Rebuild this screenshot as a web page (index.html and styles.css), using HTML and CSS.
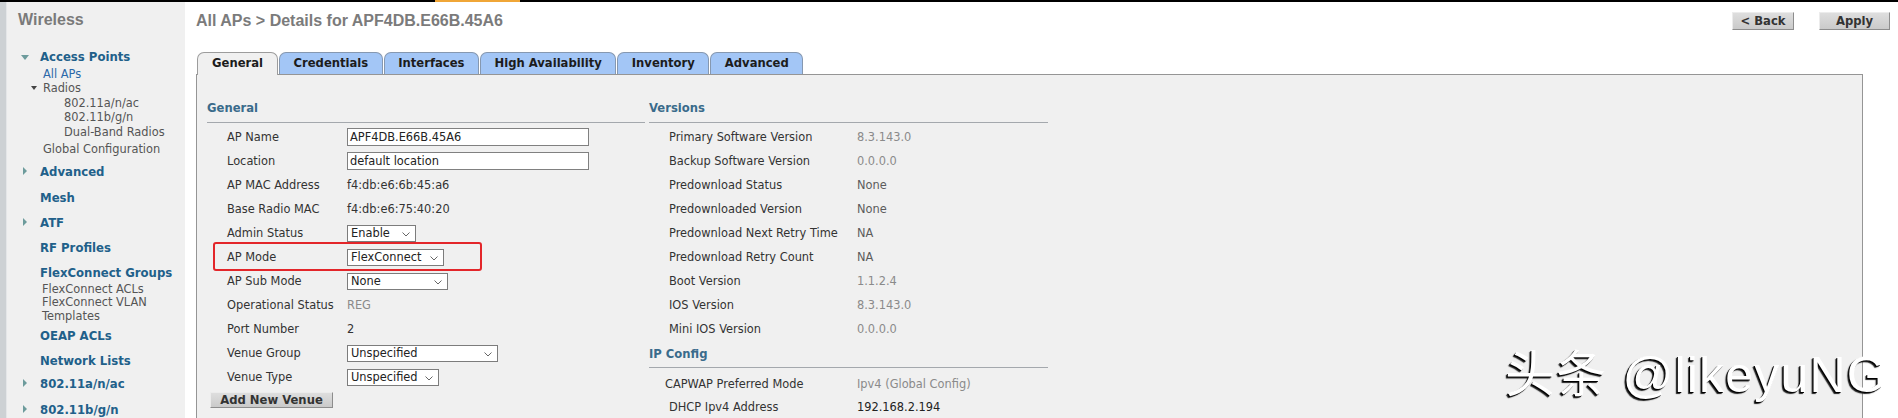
FILE: index.html
```html
<!DOCTYPE html>
<html lang="en">
<head>
  <meta charset="UTF-8">
  <title>All APs &gt; Details</title>
  <link rel="stylesheet" href="styles.css">
</head>
<body>
  <div class="topline"></div>
  <div class="page">
    <div class="strip"></div>

    <div class="sidebar">
      <div class="side-title">Wireless</div>
      <ul class="menu">
        <li class="item"><span class="arrow down"></span>Access Points</li>
        <li class="sub">
          <div class="link current">All APs</div>
          <div class="link"><span class="mini-arrow"></span>Radios</div>
          <div class="link deep">802.11a/n/ac</div>
          <div class="link deep">802.11b/g/n</div>
          <div class="link deep">Dual-Band Radios</div>
          <div class="link global">Global Configuration</div>
        </li>
        <li class="item gap6"><span class="arrow right"></span>Advanced</li>
        <li class="item gap6">Mesh</li>
        <li class="item"><span class="arrow right"></span>ATF</li>
        <li class="item">RF Profiles</li>
        <li class="item">FlexConnect Groups</li>
        <li class="sub flex">
          <div class="link">FlexConnect ACLs</div>
          <div class="link">FlexConnect VLAN Templates</div>
        </li>
        <li class="item gap3">OEAP ACLs</li>
        <li class="item">Network Lists</li>
        <li class="item gap3"><span class="arrow right"></span>802.11a/n/ac</li>
        <li class="item gap6"><span class="arrow right"></span>802.11b/g/n</li>
      </ul>
    </div>

    <div class="main">
      <div class="header">
        <h1>All APs &gt; Details for APF4DB.E66B.45A6</h1>
        <div class="actions">
          <button class="btn back">&lt; Back</button>
          <button class="btn apply">Apply</button>
        </div>
      </div>

      <ul class="tabs">
        <li class="tab selected">General</li>
        <li class="tab">Credentials</li>
        <li class="tab">Interfaces</li>
        <li class="tab">High Availability</li>
        <li class="tab">Inventory</li>
        <li class="tab">Advanced</li>
      </ul>

      <div class="panel">
        <div class="col col-left">
          <div class="section-title">General</div>
          <div class="row"><span class="label">AP Name</span><span class="textbox">APF4DB.E66B.45A6</span></div>
          <div class="row"><span class="label">Location</span><span class="textbox">default location</span></div>
          <div class="row"><span class="label">AP MAC Address</span><span class="value">f4:db:e6:6b:45:a6</span></div>
          <div class="row"><span class="label">Base Radio MAC</span><span class="value">f4:db:e6:75:40:20</span></div>
          <div class="row"><span class="label">Admin Status</span><span class="select w-admin">Enable<svg width="8" height="5" viewBox="0 0 8 5"><path d="M0.5 0.5 L4 4 L7.5 0.5" fill="none" stroke="#666"/></svg></span></div>
          <div class="row marked"><span class="label">AP Mode</span><span class="select w-mode">FlexConnect<svg width="8" height="5" viewBox="0 0 8 5"><path d="M0.5 0.5 L4 4 L7.5 0.5" fill="none" stroke="#666"/></svg></span></div>
          <div class="row"><span class="label">AP Sub Mode</span><span class="select w-sub">None<svg width="8" height="5" viewBox="0 0 8 5"><path d="M0.5 0.5 L4 4 L7.5 0.5" fill="none" stroke="#666"/></svg></span></div>
          <div class="row"><span class="label">Operational Status</span><span class="value light">REG</span></div>
          <div class="row"><span class="label">Port Number</span><span class="value">2</span></div>
          <div class="row"><span class="label">Venue Group</span><span class="select w-group">Unspecified<svg width="8" height="5" viewBox="0 0 8 5"><path d="M0.5 0.5 L4 4 L7.5 0.5" fill="none" stroke="#666"/></svg></span></div>
          <div class="row"><span class="label">Venue Type</span><span class="select w-type">Unspecified<svg width="8" height="5" viewBox="0 0 8 5"><path d="M0.5 0.5 L4 4 L7.5 0.5" fill="none" stroke="#666"/></svg></span></div>
          <button class="btn venue">Add New Venue</button>
        </div>

        <div class="col col-right">
          <div class="section-title">Versions</div>
          <div class="row"><span class="label">Primary Software Version</span><span class="value light">8.3.143.0</span></div>
          <div class="row"><span class="label">Backup Software Version</span><span class="value light">0.0.0.0</span></div>
          <div class="row"><span class="label">Predownload Status</span><span class="value mid">None</span></div>
          <div class="row"><span class="label">Predownloaded Version</span><span class="value mid">None</span></div>
          <div class="row"><span class="label">Predownload Next Retry Time</span><span class="value mid">NA</span></div>
          <div class="row"><span class="label">Predownload Retry Count</span><span class="value mid">NA</span></div>
          <div class="row"><span class="label">Boot Version</span><span class="value light">1.1.2.4</span></div>
          <div class="row"><span class="label">IOS Version</span><span class="value light">8.3.143.0</span></div>
          <div class="row"><span class="label">Mini IOS Version</span><span class="value light">0.0.0.0</span></div>
          <div class="section-title second">IP Config</div>
          <div class="row tight"><span class="label nudge">CAPWAP Preferred Mode</span><span class="value light">Ipv4 (Global Config)</span></div>
          <div class="row tight"><span class="label">DHCP Ipv4 Address</span><span class="value dark">192.168.2.194</span></div>
        </div>
      </div>
    </div>
  </div>

  <div class="watermark">头条 @likeyuNG</div>
</body>
</html>
```

FILE: styles.css
```css
html, body {
  margin: 0;
  height: 418px;
  overflow: hidden;
  background: #fff;
}
body {
  position: relative;
  font-family: "DejaVu Sans", Verdana, sans-serif;
  font-size: 11.4px;
  color: #333;
}

/* --------------- top line ----------------- */
.topline {
  height: 2px;
  background: linear-gradient(to right, #000 435px, #f0a637 435px, #f0a637 520px, #000 520px);
}

.page {
  display: flex;
  height: 416px;
}

.strip {
  width: 6px;
  background: #cdd1d4;
  border-right: 1px solid #e4e6e8;
}

/* --------------- sidebar ----------------- */
.sidebar {
  width: 167px;
  padding: 8px 0 0 11px;
  background: #f0f0f0;
  flex-shrink: 0;
}
.side-title {
  font-family: "Liberation Sans", Arial, sans-serif;
  font-weight: bold;
  font-size: 16px;
  line-height: 20px;
  color: #7a7a7a;
}
.menu {
  list-style: none;
  margin: 0;
  padding: 0;
  padding-top: 17px;
}
.item {
  position: relative;
  margin-top: 5px;
  padding-left: 22px;
  line-height: 20px;
  font-weight: bold;
  font-size: 11.7px;
  color: #21608a;
  white-space: nowrap;
}
.menu > .item:first-child { margin-top: 0; }
.item.gap6 { margin-top: 6px; }
.item.gap3 { margin-top: 3px; }

.arrow {
  position: absolute;
  width: 0;
  height: 0;
}
.arrow.down {
  left: 3px;
  top: 8px;
  border-left: 4px solid transparent;
  border-right: 4px solid transparent;
  border-top: 5px solid #6d9b9c;
}
.arrow.right {
  left: 5px;
  top: 5px;
  border-top: 4.5px solid transparent;
  border-bottom: 4.5px solid transparent;
  border-left: 4px solid #6d9b9c;
}

.sub {
  padding-left: 25px;
  width: 128px;
  font-size: 11.4px;
  color: #555;
}
.sub .link { line-height: 14.4px; position: relative; }
.sub .current { color: #2b68a8; }
.sub .deep { padding-left: 21px; }
.sub .global { margin-top: 2.5px; }
.sub.flex { padding-left: 24px; width: 126px; }
.sub.flex .link { line-height: 13.5px; }
.mini-arrow {
  position: absolute;
  left: -12px;
  top: 5px;
  border-left: 3px solid transparent;
  border-right: 3px solid transparent;
  border-top: 4px solid #444;
}

/* --------------- main ----------------- */
.main {
  flex: 1;
  margin-left: 11px;
  padding-right: 8px;
  display: flex;
  flex-direction: column;
}
.header {
  display: flex;
  justify-content: space-between;
  align-items: flex-start;
  height: 50px;
}
h1 {
  margin: 9px 0 0 0;
  font-family: "Liberation Sans", Arial, sans-serif;
  font-size: 16px;
  line-height: 20px;
  color: #7b7b7b;
}
.actions {
  display: flex;
  gap: 25px;
  margin-top: 10px;
}
.btn {
  font-family: "DejaVu Sans", Verdana, sans-serif;
  font-weight: bold;
  font-size: 11.6px;
  color: #333;
  height: 18px;
  padding: 0;
  background: linear-gradient(#dedede, #cacaca);
  border: 1px solid #ececec;
  border-right-color: #8d8d8d;
  border-bottom-color: #8d8d8d;
  border-radius: 0;
}
.back { width: 62px; }
.apply { width: 71px; }

/* --------------- tabs ----------------- */
.tabs {
  display: flex;
  align-items: flex-end;
  gap: 1px;
  list-style: none;
  margin: 0 0 -1px 1px;
  padding: 0;
  position: relative;
  z-index: 2;
}
.tab {
  height: 21px;
  line-height: 21px;
  padding: 0 13.5px;
  margin-bottom: 1px;
  font-weight: bold;
  font-size: 11.6px;
  color: #1c1c1c;
  background: #a3c6f6;
  border: 1px solid #8698b0;
  border-bottom: none;
  border-radius: 7px 7px 0 0;
}
.tab.selected {
  height: 22px;
  margin-bottom: 0;
  padding: 0 14px;
  background: #f0f0f0;
  border-color: #9c9c9c;
}

/* --------------- panel ----------------- */
.panel {
  flex: 1;
  display: flex;
  gap: 4px;
  margin-right: 27px;
  padding: 23px 10px 0;
  background: #f0f0f0;
  border: 1px solid #959595;
  border-bottom: none;
}
.col-left { width: 438px; }
.col-right { width: 399px; }

.section-title {
  font-weight: bold;
  font-size: 11.6px;
  line-height: 20px;
  padding-bottom: 4px;
  margin-bottom: 2px;
  color: #3a6b8b;
  border-bottom: 1px solid #a4a8ad;
}
.section-title.second {
  margin-top: 3px;
  padding-bottom: 3px;
  margin-bottom: 4px;
}

.row {
  display: flex;
  align-items: center;
  height: 24px;
  padding-left: 20px;
  position: relative;
}
.row.tight { height: 23px; }
.col-left .label { width: 120px; }
.col-right .label { width: 188px; }
.label.nudge { margin-left: -4px; width: 192px; }

.value { color: #333; }
.value.light { color: #8a8a8a; }
.value.mid { color: #5c5c5c; }
.value.dark { color: #222; }

.textbox {
  width: 238px;
  height: 16px;
  line-height: 16px;
  padding-left: 2px;
  background: #fff;
  border: 1px solid #808080;
  color: #222;
}
.select {
  display: flex;
  justify-content: space-between;
  align-items: center;
  height: 15px;
  line-height: 15px;
  padding: 0 5px 0 3px;
  background: #fff;
  border: 1px solid #7c7c7c;
  color: #222;
  box-sizing: content-box;
}
.select svg { margin-top: 3px; }
.w-admin { width: 59px; }
.w-mode { width: 87px; }
.w-sub { width: 91px; }
.w-group { width: 141px; }
.w-type { width: 82px; }

.row.marked::after {
  content: "";
  position: absolute;
  left: 6px;
  top: -3px;
  width: 265px;
  height: 25px;
  border: 2px solid #e3262a;
  border-radius: 3px;
}

.venue {
  display: block;
  width: 123px;
  height: 16px;
  margin: 3px 0 0 3px;
  line-height: 12px;
}

/* --------------- watermark ----------------- */
.watermark {
  position: absolute;
  left: 1505px;
  top: 350px;
  font-family: "Liberation Sans", "Noto Sans CJK SC", sans-serif;
  font-size: 50px;
  line-height: 50px;
  letter-spacing: 1.2px;
  color: #fff;
  text-shadow: -1px 1px 0 #000, -2px 2px 1px #222;
  white-space: nowrap;
}
```
